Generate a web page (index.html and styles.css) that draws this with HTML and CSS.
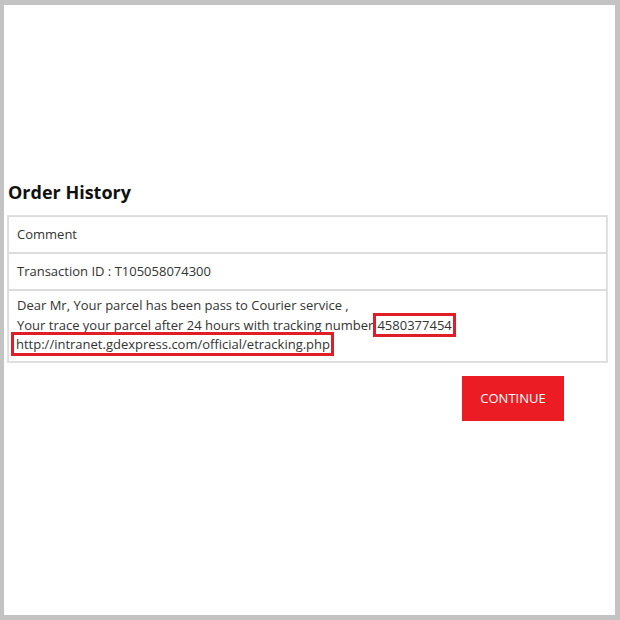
FILE: index.html
```html
<!DOCTYPE html>
<html>
<head>
<meta charset="utf-8">
<link rel="stylesheet" href="styles.css">
</head>
<body>
<div class="frame">
  <div class="content">
    <h2 class="title">Order History</h2>
    <table class="history">
      <tr><td class="cell">Comment</td></tr>
      <tr><td class="cell">Transaction ID : T105058074300</td></tr>
      <tr><td class="cell msg">Dear Mr, Your parcel has been pass to Courier service ,<br>Your trace your parcel after 24 hours with tracking number<span class="mark">4580377454</span><br><span class="mark url">http://intranet.gdexpress.com/official/etracking.php</span></td></tr>
    </table>
    <div class="actions">
      <button class="btn">CONTINUE</button>
    </div>
  </div>
</div>
</body>
</html>
```
FILE: styles.css
```css
html, body { margin: 0; padding: 0; }
body {
  background: #c3c3c3;
  width: 620px;
  height: 620px;
  font-family: "Open Sans", "Liberation Sans", sans-serif;
}
.frame {
  position: absolute;
  left: 4px;
  top: 5px;
  width: 611px;
  height: 610px;
  background: #fff;
}
.content {
  padding: 175px 7px 0 3px;
}
.title {
  margin: 0 0 10px 1px;
  font-size: 18px;
  font-weight: 700;
  color: #111;
  line-height: 25px;
}
.history {
  width: 100%;
  border-collapse: separate;
  border-spacing: 0;
  border: 1px solid #e2e2e2;
}
.cell {
  border: 1px solid #dcdcdc;
  padding: 8px 9px 9px 8px;
  font-size: 13px;
  line-height: 18px;
  color: #333;
}
.msg {
  padding: 5px 5px 6px 8px;
  line-height: 19.5px;
}
.mark {
  border: 3px solid #e01e27;
  padding: 0 1px;
}
.url {
  margin-left: -6px;
  padding: 0 1px 0 2px;
}
.actions {
  display: flex;
  justify-content: flex-end;
  padding: 13px 44px 0 0;
}
.btn {
  background: #ec1c24;
  border: none;
  color: #fff;
  font-family: "Open Sans", "Liberation Sans", sans-serif;
  font-size: 13px;
  width: 102px;
  height: 45px;
  padding: 0;
}
```
